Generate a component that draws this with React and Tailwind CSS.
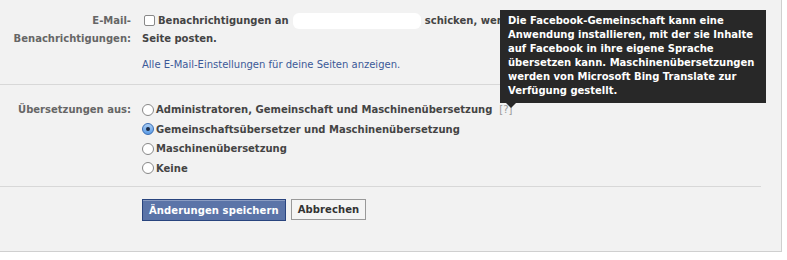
import React, { useState } from 'react';

const font = { fontFamily: '"DejaVu Sans", "Liberation Sans", sans-serif' };

function Radio({ checked }) {
  return (
    <span className={`inline-flex items-center justify-center w-[12px] h-[12px] rounded-full border mr-[2px] shrink-0 ${checked ? 'border-[#3a6db3] bg-gradient-to-b from-[#a9cdf4] to-[#5a9be6]' : 'border-[#888] bg-white'}`}>
      {checked && <span className="w-[4px] h-[4px] rounded-full bg-[#1a2a44]"></span>}
    </span>
  );
}

export default function App() {
  const [choice, setChoice] = useState(1);
  const options = [
    'Administratoren, Gemeinschaft und Maschinenübersetzung',
    'Gemeinschaftsübersetzer und Maschinenübersetzung',
    'Maschinenübersetzung',
    'Keine',
  ];

  return (
    <div className="w-[787px] h-[260px] bg-white" style={font}>
      <div className="relative w-[782px] h-[252px] bg-[#f2f2f2] border-r border-b border-[#cfcfcf] text-[10px]">
        {/* E-Mail row */}
        <div className="flex pt-[12px] pb-[12px] mr-[22px] border-b border-[#d8d8d8]">
          <div className="w-[131px] text-right font-bold text-[#666] leading-[18px] shrink-0">
            E-Mail-<br />Benachrichtigungen:
          </div>
          <div className="ml-[11px]">
            <div className="font-bold text-[#444] leading-[18px]">
              <div className="whitespace-nowrap">
                <span className="inline-block align-[-2px] w-[11px] h-[11px] border border-[#888] rounded-[2px] bg-white mr-[3px] ml-[2px]"></span>
                Benachrichtigungen an
                <span className="inline-block align-middle w-[128px] h-[16px] bg-white rounded-[6px] mx-[4px]"></span>
                schicken, wen
              </div>
              <div>Seite posten.</div>
            </div>
            <div className="mt-[10px] leading-[14px] text-[#3b5998]">Alle E-Mail-Einstellungen für deine Seiten anzeigen.</div>
          </div>
        </div>

        {/* Translation row */}
        <div className="flex pt-[15px] pb-[8px] mr-[20px] border-b border-[#d8d8d8]">
          <div className="w-[131px] text-right font-bold text-[#666] leading-[19px] shrink-0">Übersetzungen aus:</div>
          <div className="ml-[11px] flex flex-col">
            {options.map((o, i) => (
              <label key={o} className="flex items-center h-[19.5px] font-bold text-[#444] cursor-pointer" onClick={() => setChoice(i)}>
                <Radio checked={choice === i} />
                <span>{o}</span>
                {i === 0 && <span className="ml-[7px] font-normal text-[#999]">[?]</span>}
              </label>
            ))}
          </div>
        </div>

        {/* Buttons */}
        <div className="flex pl-[142px] pt-[12px] gap-[5px]">
          <button className="h-[22px] px-[6px] bg-[#5b74a8] border border-[#29447e] text-white font-bold text-[10px] tracking-[0.1px] shadow-[inset_0_1px_0_#8a9cc2]">Änderungen speichern</button>
          <button className="h-[21px] px-[6px] bg-[#f4f4f4] border border-[#999] text-[#333] font-bold text-[10px] tracking-[0.1px]">Abbrechen</button>
        </div>

        {/* Tooltip */}
        <div className="absolute left-[500px] top-[10px] w-[266px] bg-[#282828] text-white font-bold text-[10px] leading-[14px] px-[8px] pt-[4px] pb-[5px]">
          Die Facebook-Gemeinschaft kann eine Anwendung installieren, mit der sie Inhalte auf Facebook in ihre eigene Sprache übersetzen kann. Maschinenübersetzungen werden von Microsoft Bing Translate zur Verfügung gestellt.
          <span className="absolute left-[6px] -bottom-[5px] w-0 h-0 border-l-[5px] border-r-[5px] border-t-[5px] border-l-transparent border-r-transparent border-t-[#282828]"></span>
        </div>
      </div>
    </div>
  );
}
